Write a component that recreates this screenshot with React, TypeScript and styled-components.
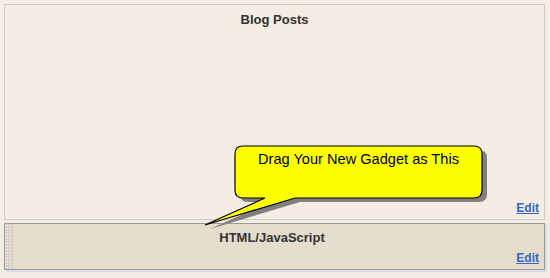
import React from 'react';
import styled, { createGlobalStyle } from 'styled-components';

const GlobalStyle = createGlobalStyle`
    html, body {
        margin: 0;
        padding: 0;
        background: #f5ede4;
        font-family: "Liberation Sans", Arial, sans-serif;
    }
`;

const Page = styled.div`
    position: relative;
    width: 550px;
    height: 278px;
    padding: 4px 5px 0 4px;
    box-sizing: border-box;
    display: flex;
    flex-direction: column;
    gap: 3px;
`;

const Section = styled.div`
    height: 216px;
    box-sizing: border-box;
    border: 1px solid #c9cbcd;
    background: #f5ede4;
    display: flex;
    flex-direction: column;
`;

const Gadget = styled.div`
    height: 47px;
    box-sizing: border-box;
    border: 1px solid #9a9a9a;
    background: #e6dccb;
    display: flex;
    box-shadow: 2px 2px 0 #dcdbe6;
`;

const Handle = styled.div`
    width: 7px;
    margin-left: 1px;
    background-image: radial-gradient(circle, #ffffff 0.8px, transparent 1px);
    background-size: 3px 3px;
    background-color: #d6d0c6;
`;

const Body = styled.div`
    flex: 1;
    display: flex;
    flex-direction: column;
    padding-right: 5px;
    margin-left: -8px;
`;

const Title = styled.div<{ $top: number }>`
    text-align: center;
    font-size: 13px;
    font-weight: bold;
    color: #333333;
    padding-top: ${(p) => p.$top}px;
`;

const Spacer = styled.div`
    flex: 1;
`;

const EditLink = styled.a`
    align-self: flex-end;
    font-size: 12px;
    font-weight: bold;
    color: #3366cc;
    text-decoration: underline;
    line-height: 14px;
    margin-bottom: 4px;
    cursor: pointer;
`;

const Callout = styled.div`
    position: absolute;
    left: 200px;
    top: 140px;
    width: 295px;
    height: 95px;
`;

const CalloutText = styled.div`
    position: absolute;
    left: 35px;
    top: 11px;
    width: 247px;
    text-align: center;
    font-size: 14.6px;
    color: #000000;
`;

const shape =
    'M 43 6 H 274 Q 282 6 282 14 V 50 Q 282 58 274 58 H 95 L 5 85 L 65 58 H 43 Q 35 58 35 50 V 14 Q 35 6 43 6 Z';

const App = () => {
    return (
        <>
            <GlobalStyle />
            <Page>
                <Section>
                    <Title $top={7}>Blog Posts</Title>
                    <Spacer />
                    <EditLink style={{ marginRight: 5 }}>Edit</EditLink>
                </Section>
                <Gadget>
                    <Handle />
                    <Body>
                        <Title $top={6}>HTML/JavaScript</Title>
                        <Spacer />
                        <EditLink>Edit</EditLink>
                    </Body>
                </Gadget>
                <Callout>
                    <svg width="295" height="95" viewBox="0 0 295 95">
                        <path d={shape} fill="#808080" transform="translate(5 4)" />
                        <path d={shape} fill="#ffff00" stroke="#000000" strokeWidth="1.2" />
                    </svg>
                    <CalloutText>Drag Your New Gadget as This</CalloutText>
                </Callout>
            </Page>
        </>
    );
};

export default App;
